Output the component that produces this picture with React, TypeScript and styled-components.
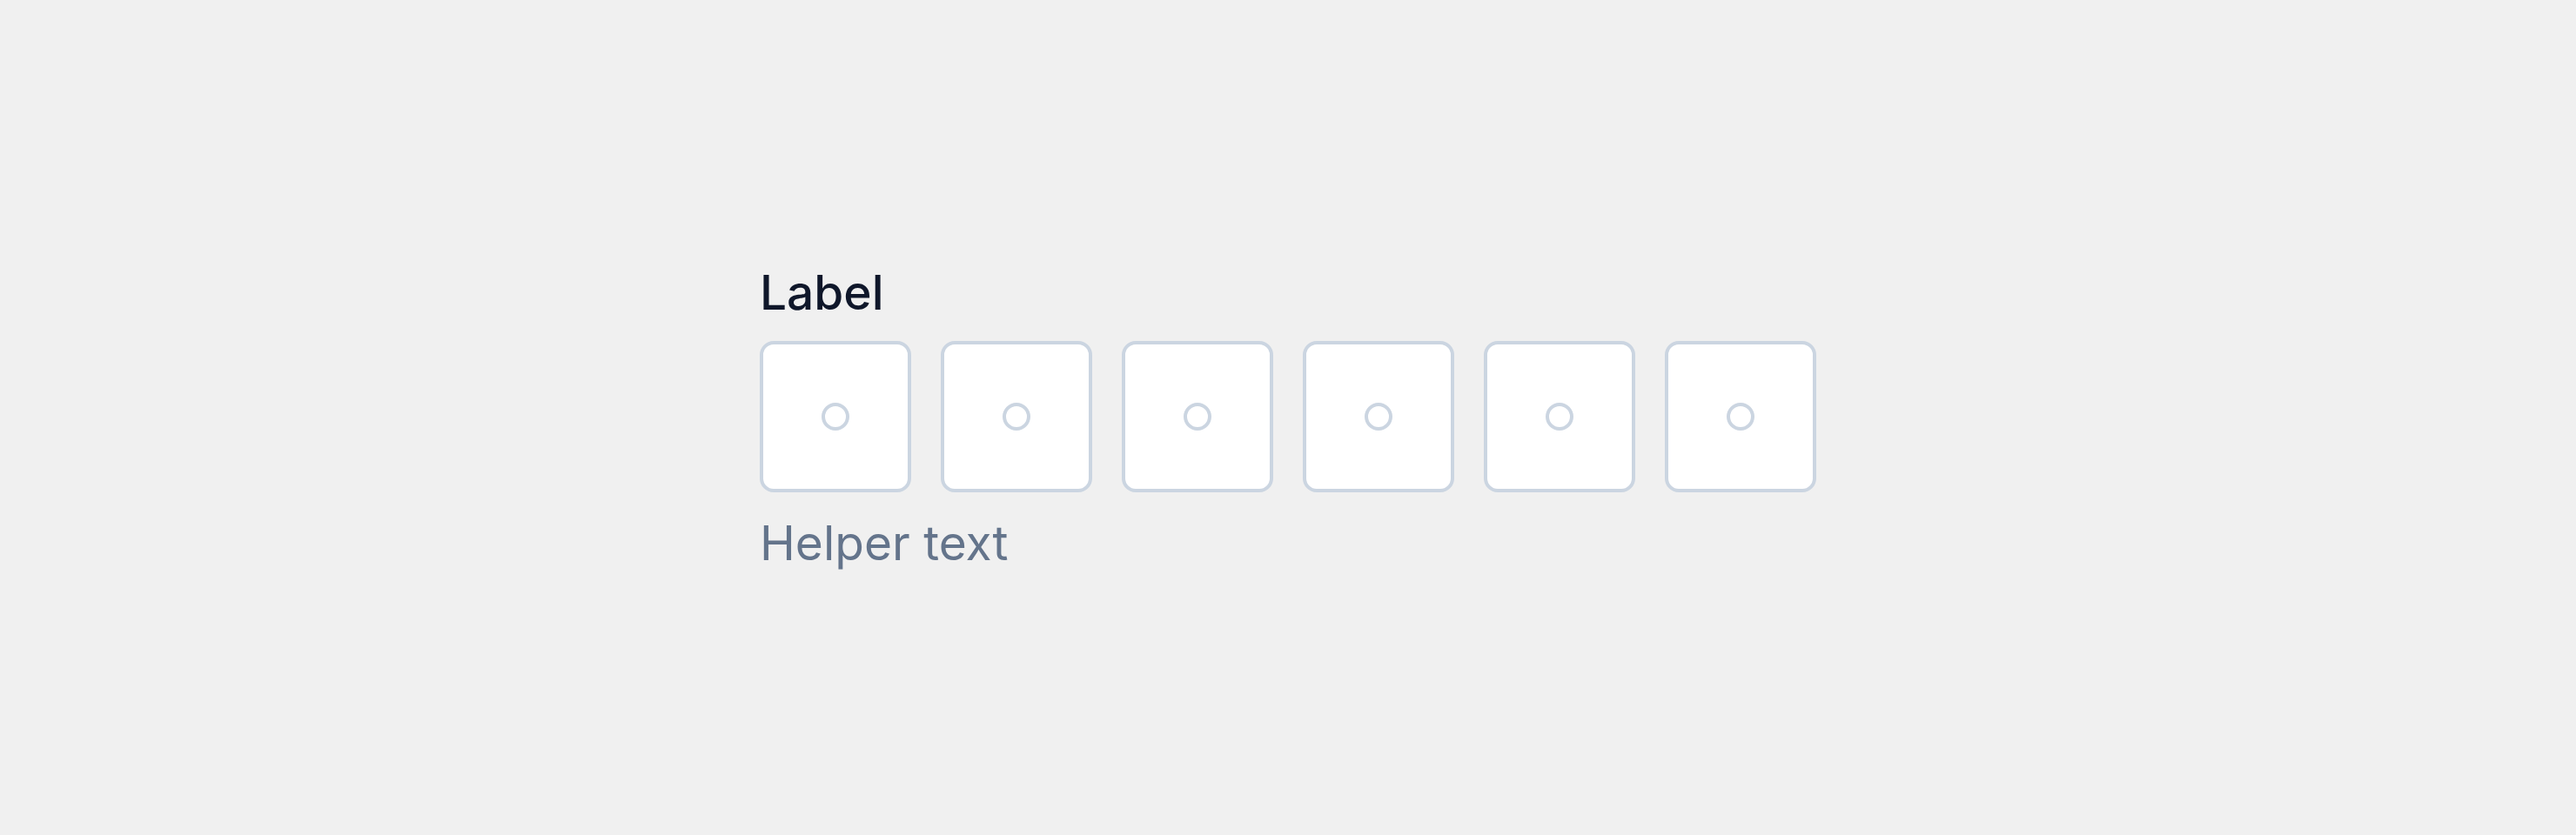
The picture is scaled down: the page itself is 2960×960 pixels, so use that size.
import styled, { createGlobalStyle } from "styled-components";

const GlobalStyle = createGlobalStyle`
  html, body {
    margin: 0;
    padding: 0;
    background: #f0f0f0;
  }
  body {
    font-family: Inter, "Noto Sans", sans-serif;
  }
`;

const Page = styled.main`
  width: 100%;
  height: 100vh;
  display: flex;
  align-items: center;
  justify-content: center;
`;

const Field = styled.div`
  display: flex;
  flex-direction: column;
`;

const Label = styled.label`
  font-size: 55px;
  line-height: 56px;
  font-weight: 500;
  color: #0f172a;
  margin-bottom: 28px;
`;

const Row = styled.div`
  display: flex;
  gap: 34px;
`;

const Cell = styled.div`
  box-sizing: border-box;
  width: 174px;
  height: 174px;
  background: #ffffff;
  border: 4px solid #cbd5e1;
  border-radius: 16px;
  display: flex;
  align-items: center;
  justify-content: center;
`;

const Dot = styled.span`
  box-sizing: border-box;
  width: 32px;
  height: 32px;
  border: 4px solid #cbd5e1;
  border-radius: 50%;
`;

const Helper = styled.p`
  margin: 30px 0 0;
  font-size: 55px;
  line-height: 56px;
  font-weight: 400;
  color: #64748b;
`;

export default function App() {
  const cells = [0, 1, 2, 3, 4, 5];
  return (
    <>
      <GlobalStyle />
      <Page>
        <Field>
          <Label>Label</Label>
          <Row>
            {cells.map((i) => (
              <Cell key={i}>
                <Dot />
              </Cell>
            ))}
          </Row>
          <Helper>Helper text</Helper>
        </Field>
      </Page>
    </>
  );
}
